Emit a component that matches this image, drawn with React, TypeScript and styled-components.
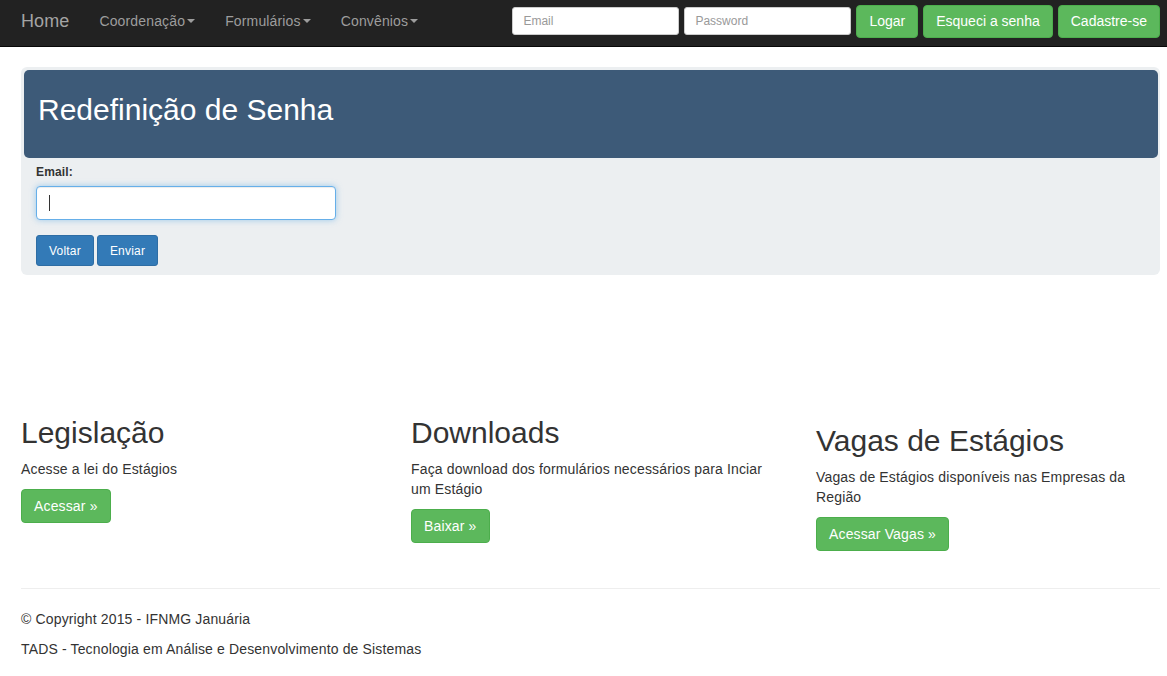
import React from "react";
import styled, { createGlobalStyle } from "styled-components";

const Global = createGlobalStyle`
  html, body { margin: 0; padding: 0; background: #fff; }
  body {
    font-family: "Liberation Sans", Arial, Helvetica, sans-serif;
    font-size: 14px;
    line-height: 20px;
    color: #333;
    letter-spacing: 0.15px;
  }
  * { box-sizing: border-box; }
`;

const Navbar = styled.nav`
  display: flex;
  align-items: center;
  height: 47px;
  background: #222;
  border-bottom: 1px solid #080808;
  padding: 0 7px 4px 6px;
`;

const Brand = styled.a`
  font-size: 18px;
  color: #a4a4a4;
  padding: 0 15px;
  line-height: 20px;
  text-decoration: none;
  letter-spacing: 0.1px;
`;

const NavLink = styled.a`
  font-size: 14px;
  color: #9d9d9d;
  padding: 0 15px;
  line-height: 20px;
  text-decoration: none;
  display: inline-flex;
  align-items: center;
`;

const Caret = styled.span`
  display: inline-block;
  width: 0;
  height: 0;
  margin-left: 2px;
  border-top: 4px solid #9d9d9d;
  border-left: 4px solid transparent;
  border-right: 4px solid transparent;
`;

const NavForm = styled.form`
  margin-left: auto;
  display: flex;
  align-items: center;
  gap: 5px;
`;

const NavInput = styled.input`
  width: 167px;
  height: 28px;
  border: 1px solid #ccc;
  border-radius: 3px;
  background: #fff;
  padding: 0 10px;
  font-family: "Liberation Sans", Arial, sans-serif;
  font-size: 12px;
  &::placeholder { color: #999; }
`;

const GreenButton = styled.button<{ $h?: number; $ls?: number }>`
  background: #5cb85c;
  border: 1px solid #4cae4c;
  border-radius: 4px;
  color: #fff;
  font-family: "Liberation Sans", Arial, sans-serif;
  font-size: 14px;
  letter-spacing: ${(p) => p.$ls ?? 0.15}px;
  line-height: 20px;
  height: ${(p) => p.$h ?? 34}px;
  padding: 0 12px;
  cursor: pointer;
`;

const Main = styled.main`
  padding: 20px 7px 0 21px;
`;

const Panel = styled.section`
  background: #eceff1;
  border-radius: 6px;
  padding: 3px 2px 9px 3px;
`;

const PanelHeader = styled.header`
  background: #3d5a78;
  border-radius: 5px;
  height: 88px;
  padding: 23px 14px 0;
`;

const PanelTitle = styled.h1`
  margin: 0;
  font-size: 30px;
  font-weight: 400;
  color: #fff;
  line-height: 33px;
  letter-spacing: 0;
`;

const PanelBody = styled.div`
  padding: 7px 12px 0 12px;
`;

const Label = styled.label`
  display: block;
  font-size: 12px;
  font-weight: bold;
  line-height: 14px;
  margin-bottom: 7px;
`;

const InputWrap = styled.div`
  position: relative;
  width: 300px;
`;

const FocusInput = styled.input`
  display: block;
  width: 300px;
  height: 34px;
  border: 1px solid #66afe9;
  border-radius: 4px;
  box-shadow: inset 0 1px 1px rgba(0,0,0,.075), 0 0 6px rgba(102,175,233,.6);
  outline: none;
  padding: 0 12px;
  font-size: 14px;
  background: #fff;
`;

const TextCaret = styled.span`
  position: absolute;
  top: 9px;
  left: 13px;
  width: 1px;
  height: 16px;
  background: #333;
`;

const BtnRow = styled.div`
  display: flex;
  gap: 3px;
  margin-top: 15px;
`;

const BlueButton = styled.button`
  background: #337ab7;
  border: 1px solid #2e6da4;
  border-radius: 3px;
  color: #fff;
  font-family: "Liberation Sans", Arial, sans-serif;
  font-size: 12px;
  letter-spacing: 0.2px;
  height: 31px;
  padding: 0 12px;
  cursor: pointer;
`;

const Columns = styled.div`
  display: grid;
  grid-template-columns: 390px 405px 340px;
  margin-top: 121px;
  align-items: start;
`;

const Col = styled.div<{ $offset?: number; $w: number }>`
  width: ${(p) => p.$w}px;
  padding-top: ${(p) => p.$offset ?? 0}px;
`;

const ColTitle = styled.h2`
  margin: 20px 0 10px;
  font-size: 30px;
  font-weight: 400;
  line-height: 33px;
  color: #333;
  letter-spacing: 0;
`;

const ColText = styled.p`
  margin: 0 0 10px;
`;

const Hr = styled.hr`
  border: 0;
  border-top: 1px solid #eee;
  margin: 37px 0 20px;
`;

const FooterText = styled.p`
  margin: 0 0 10px;
`;

export default function App() {
  return (
    <>
      <Global />
      <Navbar>
        <Brand href="#">Home</Brand>
        <NavLink href="#">Coordenação<Caret /></NavLink>
        <NavLink href="#">Formulários<Caret /></NavLink>
        <NavLink href="#">Convênios<Caret /></NavLink>
        <NavForm onSubmit={(e) => e.preventDefault()}>
          <NavInput placeholder="Email" />
          <NavInput placeholder="Password" type="password" />
          <GreenButton type="button" $h={33} $ls={0}>Logar</GreenButton>
          <GreenButton type="button" $h={33} $ls={0}>Esqueci a senha</GreenButton>
          <GreenButton type="button" $h={33} $ls={0}>Cadastre-se</GreenButton>
        </NavForm>
      </Navbar>
      <Main>
        <Panel>
          <PanelHeader>
            <PanelTitle>Redefinição de Senha</PanelTitle>
          </PanelHeader>
          <PanelBody>
            <Label>Email:</Label>
            <InputWrap>
              <FocusInput />
              <TextCaret />
            </InputWrap>
            <BtnRow>
              <BlueButton>Voltar</BlueButton>
              <BlueButton>Enviar</BlueButton>
            </BtnRow>
          </PanelBody>
        </Panel>
        <Columns>
          <Col $w={370}>
            <ColTitle>Legislação</ColTitle>
            <ColText>Acesse a lei do Estágios</ColText>
            <GreenButton>Acessar »</GreenButton>
          </Col>
          <Col $w={365}>
            <ColTitle>Downloads</ColTitle>
            <ColText>Faça download dos formulários necessários para Inciar um Estágio</ColText>
            <GreenButton>Baixar »</GreenButton>
          </Col>
          <Col $w={330} $offset={8}>
            <ColTitle>Vagas de Estágios</ColTitle>
            <ColText>Vagas de Estágios disponíveis nas Empresas da Região</ColText>
            <GreenButton>Acessar Vagas »</GreenButton>
          </Col>
        </Columns>
        <Hr />
        <FooterText>© Copyright 2015 - IFNMG Januária</FooterText>
        <FooterText>TADS - Tecnologia em Análise e Desenvolvimento de Sistemas</FooterText>
      </Main>
    </>
  );
}
